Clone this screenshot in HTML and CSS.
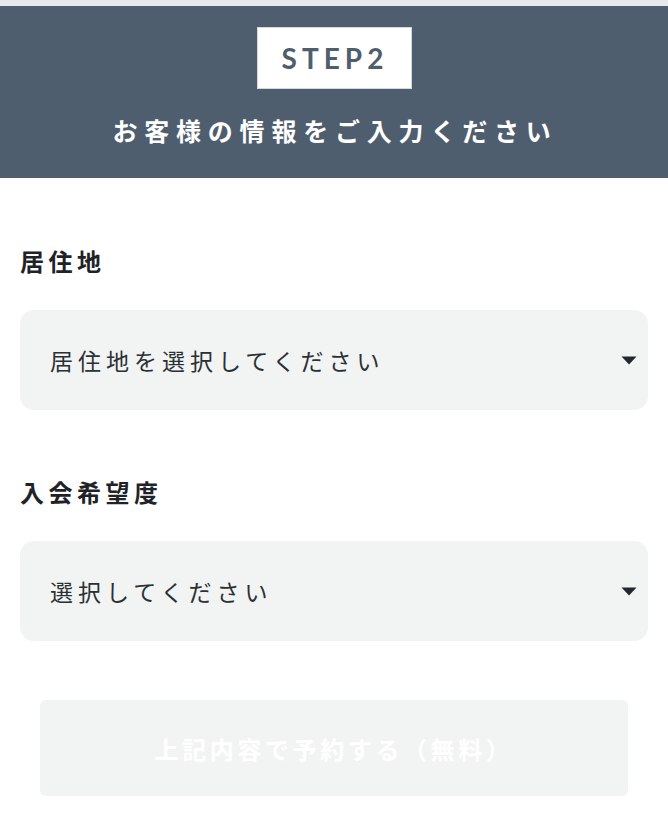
FILE: index.html
```html
<!DOCTYPE html>
<html lang="ja">
<head>
<meta charset="utf-8">
<title>STEP2</title>
<link rel="stylesheet" href="styles.css">
</head>
<body>
<div class="topline"></div>
<header class="step-header">
  <div class="step-badge">STEP2</div>
  <h1 class="step-title">お客様の情報をご入力ください</h1>
</header>
<main class="form">
  <div class="field">
    <div class="field-label">居住地</div>
    <div class="select">
      <span class="select-text">居住地を選択してください</span>
      <svg class="select-arrow" width="16" height="9" viewBox="0 0 16 9"><polygon points="0.5,0.5 15.5,0.5 8,8.5" fill="#23282c"/></svg>
    </div>
  </div>
  <div class="field field-second">
    <div class="field-label">入会希望度</div>
    <div class="select">
      <span class="select-text">選択してください</span>
      <svg class="select-arrow" width="16" height="9" viewBox="0 0 16 9"><polygon points="0.5,0.5 15.5,0.5 8,8.5" fill="#23282c"/></svg>
    </div>
  </div>
  <div class="submit">上記内容で予約する（無料）</div>
</main>
</body>
</html>
```

FILE: styles.css
```css
html, body {
  margin: 0;
  padding: 0;
  background: #ffffff;
}
body {
  font-family: "Noto Sans CJK JP", "Noto Sans", sans-serif;
  width: 668px;
}
.topline {
  height: 6px;
  background: #e8e9ea;
}
.step-header {
  background: #4f5e6e;
  padding: 21px 0 32px;
  display: flex;
  flex-direction: column;
  align-items: center;
}
.step-badge {
  width: 155px;
  height: 62px;
  box-sizing: border-box;
  background: #ffffff;
  border: 1px solid #d6d9dc;
  display: flex;
  align-items: center;
  justify-content: center;
  font-family: "Lato", "Inter", sans-serif;
  font-weight: 700;
  font-size: 28px;
  letter-spacing: 5px;
  padding-left: 2px;
  color: #4f5e6e;
}
.step-title {
  margin: 25px 0 0;
  font-size: 25px;
  line-height: 32px;
  font-weight: 700;
  color: #ffffff;
  letter-spacing: 6.8px;
  padding-left: 2px;
}
.form {
  padding: 67px 20px 40px;
}
.field-second {
  margin-top: 66px;
}
.field-label {
  font-size: 24px;
  line-height: 32px;
  font-weight: 700;
  color: #1f2327;
  letter-spacing: 4.5px;
}
.select {
  margin-top: 33px;
  height: 100px;
  background: #f2f4f3;
  border-radius: 14px;
  display: flex;
  align-items: center;
  justify-content: space-between;
  padding: 0 11px 0 30px;
}
.select-text {
  font-size: 23px;
  color: #2b3034;
  letter-spacing: 5px;
}
.select-arrow {
  display: block;
}
.submit {
  margin: 59px 20px 0;
  height: 96px;
  background: #f2f4f3;
  border-radius: 6px;
  display: flex;
  align-items: center;
  justify-content: center;
  font-size: 24px;
  font-weight: 700;
  color: #ffffff;
  letter-spacing: 3.6px;
}
```
